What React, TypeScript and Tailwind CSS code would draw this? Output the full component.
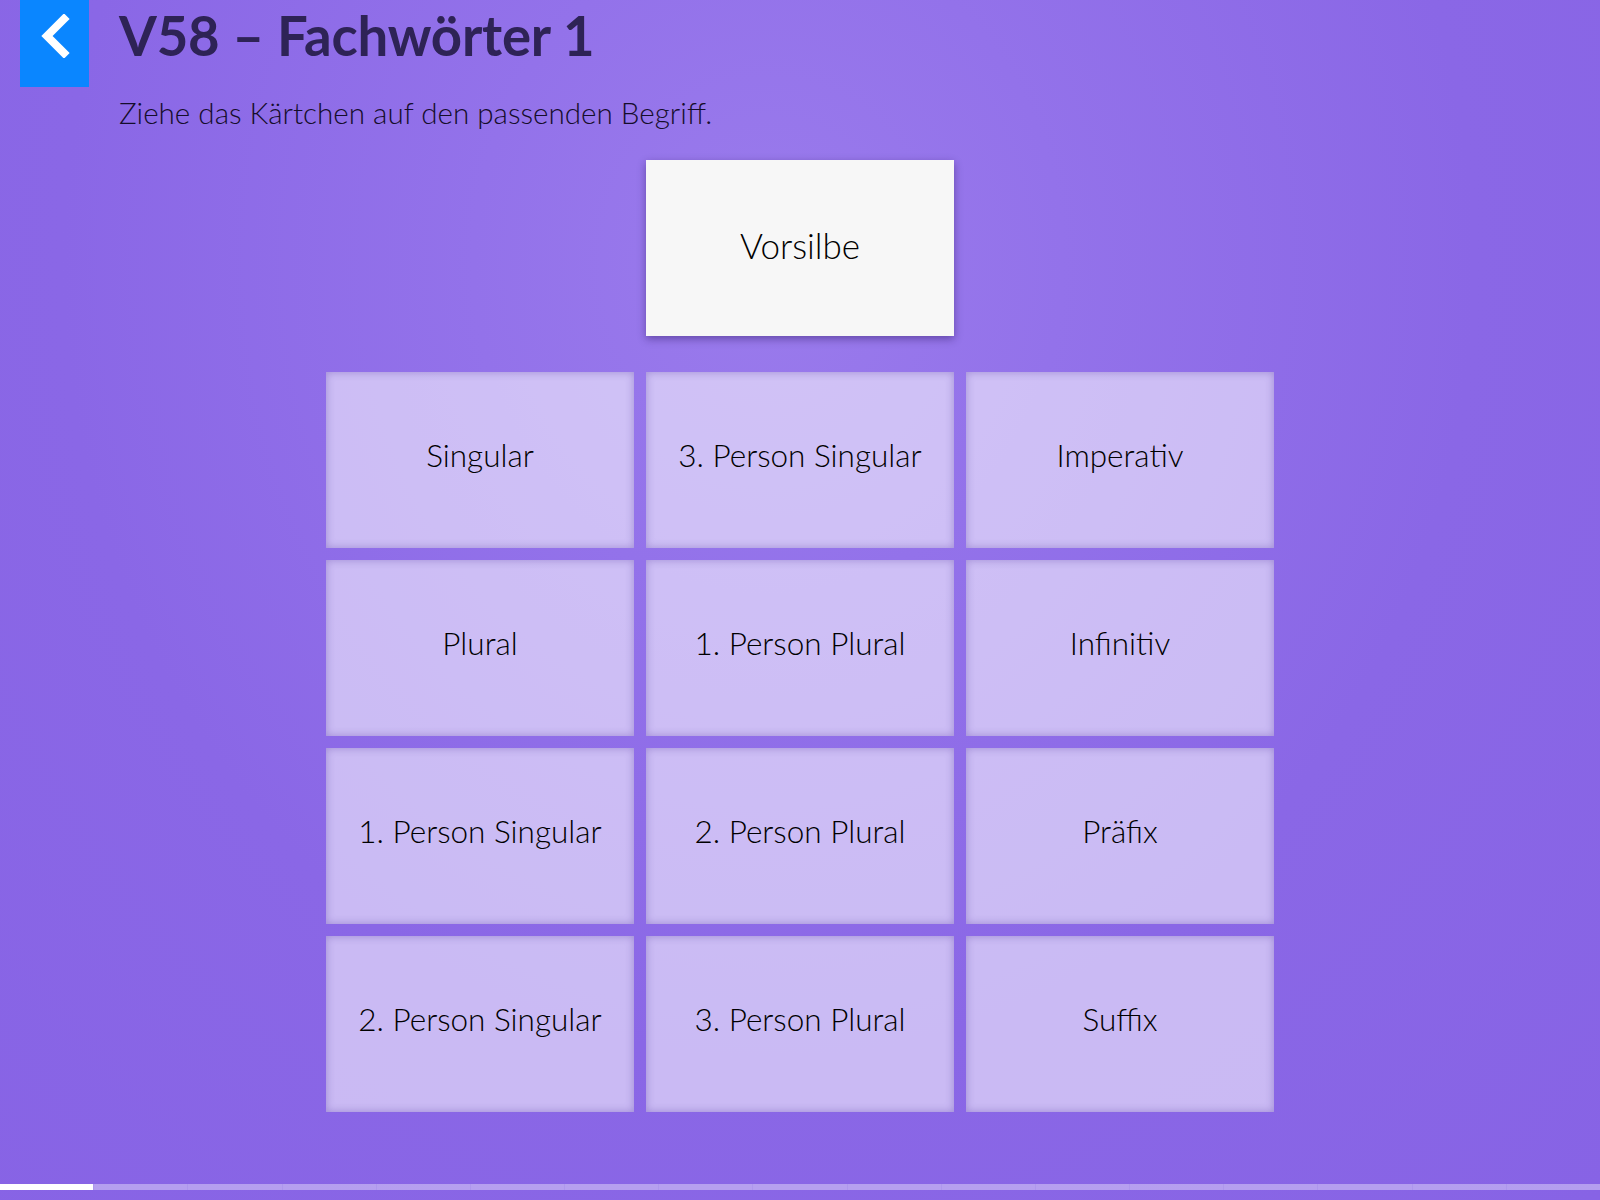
import React from "react";

const cards = [
  "Singular",
  "3. Person Singular",
  "Imperativ",
  "Plural",
  "1. Person Plural",
  "Infinitiv",
  "1. Person Singular",
  "2. Person Plural",
  "Präfix",
  "2. Person Singular",
  "3. Person Plural",
  "Suffix",
];

export default function App() {
  const segs = Array.from({ length: 17 }, (_, i) => i);
  return (
    <div
      className="w-full h-[1200px] flex flex-col overflow-hidden bg-[radial-gradient(ellipse_at_48%_22%,#9a7bec_0%,#9372ea_25%,#8a67e6_60%,#8763e5_100%)]"
      style={{ fontFamily: "Lato, 'Open Sans', sans-serif" }}
    >
      {/* header */}
      <div className="flex items-start">
        <button className="ml-[20px] w-[69px] h-[87px] bg-[#0a86ff] flex justify-center items-start pt-[14px]">
          <svg width="40" height="44" viewBox="0 0 40 44">
            <path d="M29 5 L12 22 L29 39" fill="none" stroke="#ffffff" strokeWidth="8" strokeLinecap="square" strokeLinejoin="miter" />
          </svg>
        </button>
        <h1 className="ml-[30px] pt-[8px] leading-none text-[54.5px] font-bold text-[#2e2356] tracking-[-0.2px]">
          V58 – Fachwörter 1
        </h1>
      </div>
      <p className="ml-[119px] mt-[8px] text-[29.6px] font-light text-[#150d2b] leading-[36px]">
        Ziehe das Kärtchen auf den passenden Begriff.
      </p>

      {/* draggable card */}
      <div className="flex justify-center mt-[29px]">
        <div className="w-[308px] h-[176px] pb-[6px] bg-[#f7f7f7] shadow-[0_3px_8px_rgba(40,20,90,0.45)] flex items-center justify-center">
          <span className="text-[35px] font-light text-black leading-none">Vorsilbe</span>
        </div>
      </div>

      {/* grid */}
      <div className="flex justify-center mt-[36px]">
        <div className="grid grid-cols-[308px_308px_308px] gap-x-[12px] gap-y-[12px]">
          {cards.map((c) => (
            <div
              key={c}
              className="h-[176px] pb-[9px] bg-[rgba(255,255,255,0.55)] shadow-[inset_0_0_8px_rgba(60,30,140,0.32)] flex items-center justify-center"
            >
              <span className="text-[31.5px] font-light text-black leading-none">{c}</span>
            </div>
          ))}
        </div>
      </div>

      <div className="flex-1" />

      {/* progress */}
      <div className="h-[6px] flex mb-[10px]">
        {segs.map((i) =>
          i === 0 ? (
            <div key={i} className="flex-1 bg-white" />
          ) : (
            <div key={i} className="flex-1 bg-[rgba(255,255,255,0.38)] border-l border-[rgba(140,110,225,0.18)]" />
          )
        )}
      </div>
    </div>
  );
}
